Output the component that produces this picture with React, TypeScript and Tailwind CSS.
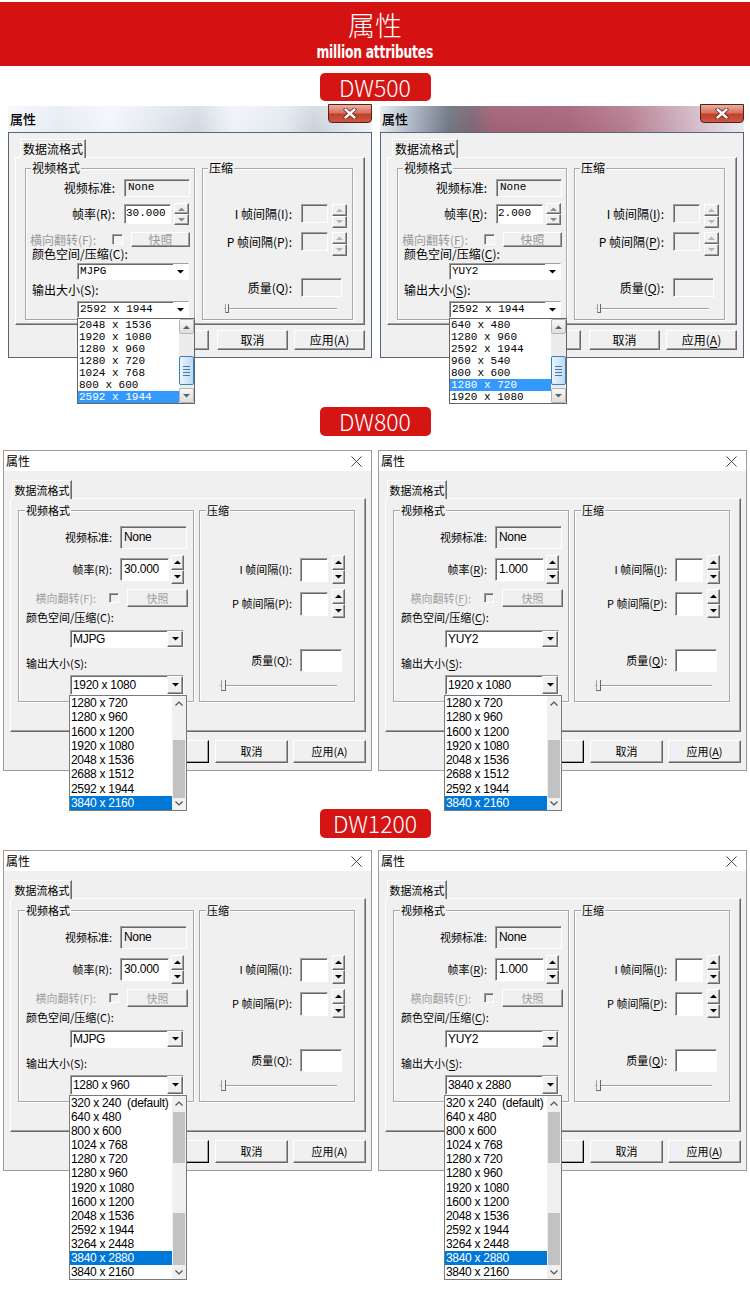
import React from "react";

type Thumb = { top: number; h: number };

// classic 3D borders
const raised =
  "border border-t-white border-l-white border-r-[#696969] border-b-[#696969] shadow-[inset_-1px_-1px_0_#a0a0a0] bg-[#f0f0f0]";
const sunken =
  "border border-t-[#a0a0a0] border-l-[#a0a0a0] border-r-white border-b-white shadow-[inset_1px_1px_0_#696969]";
const etched = "border border-[#a8a8a8] shadow-[inset_1px_1px_0_#fff,1px_1px_0_#fff]";

const GLASS_LEFT =
  "bg-[linear-gradient(180deg,rgba(255,255,255,0.6)_0%,rgba(255,255,255,0)_45%,rgba(255,255,255,0.35)_100%),linear-gradient(90deg,#e9f0f8_0%,#cdd8e6_14%,#e6edf6_28%,#c9d4e2_40%,#a8b5c6_52%,#dfe8f2_62%,#c8d3e0_76%,#9ca9ba_84%,#dfe7f1_100%)]";
const GLASS_RIGHT =
  "bg-[linear-gradient(180deg,rgba(255,255,255,0.25)_0%,rgba(255,255,255,0)_45%,rgba(255,255,255,0.2)_100%),linear-gradient(90deg,#dfe7f0_0%,#96a2b2_9%,#4c5666_19%,#5e4252_25%,#8a3a55_31%,#923f5b_52%,#a35f76_68%,#c4a0b0_84%,#e3e6ee_100%)]";

// label with an optional underlined access key, e.g. 帧率(R):
function Lb({ t, k, u }: { t: string; k?: string; u?: boolean }) {
  if (!k || !u) return <>{t}</>;
  const i = t.indexOf("(" + k + ")");
  return (
    <>
      {t.slice(0, i + 1)}
      <span className="underline underline-offset-[2px]">{k}</span>
      {t.slice(i + 2)}
    </>
  );
}

function Tri({ up, c = "#000" }: { up?: boolean; c?: string }) {
  return (
    <svg width="7" height="4" viewBox="0 0 7 4" className="block">
      <path d={up ? "M0 4L3.5 0.5L7 4Z" : "M0 0L7 0L3.5 3.5Z"} fill={c} />
    </svg>
  );
}

function Chev({ up }: { up?: boolean }) {
  return (
    <svg width="8" height="5" viewBox="0 0 8 5" className="block">
      <path
        d={up ? "M0.5 4.5L4 1L7.5 4.5" : "M0.5 0.5L4 4L7.5 0.5"}
        fill="none"
        stroke="#505050"
        strokeWidth="1.2"
      />
    </svg>
  );
}

function Spin({ cls, c }: { cls: string; c: string }) {
  return (
    <div className={`flex flex-col ${cls}`}>
      <div className={`flex-1 ${raised} flex items-center justify-center`}>
        <Tri up c={c} />
      </div>
      <div className={`flex-1 ${raised} flex items-center justify-center`}>
        <Tri c={c} />
      </div>
    </div>
  );
}

function Badge({ label, cls }: { label: string; cls: string }) {
  return (
    <div
      className={`mx-auto w-[111px] rounded-[5px] bg-[#d51414] text-white flex items-center justify-center text-[23px] font-light font-['Noto_Sans_CJK_SC',sans-serif] ${cls}`}
    >
      {label}
    </div>
  );
}

/* ---------- Windows 10 style dialog ---------- */

type Dlg10Props = {
  codec: string;
  fps: string;
  size: string;
  options: string[];
  sel: number;
  u?: boolean;
  thumbs: Thumb[];
  rowH: string;
};

function List10({ options, sel, thumbs, rowH }: { options: string[]; sel: number; thumbs: Thumb[]; rowH: string }) {
  return (
    <div className="absolute left-[-2px] top-[calc(100%+1px)] w-[118px] border border-[#7a7a7a] bg-white flex z-20 font-['Liberation_Sans',sans-serif] text-[12px] tracking-[-0.3px]">
      <div className="flex-1 flex flex-col">
        {options.map((o, i) => (
          <div
            key={i}
            className={`${rowH} leading-[14px] pl-[1px] whitespace-pre ${i === sel ? "bg-[#0078d7] text-white" : "text-black"}`}
          >
            {o}
          </div>
        ))}
      </div>
      <div className="w-[14px] relative bg-[#f0f0f0] flex flex-col justify-between">
        {thumbs.map((t, i) => (
          <div
            key={i}
            className="absolute left-[1px] right-[1px] bg-[#c2c2c2]"
            style={{ top: t.top, height: t.h }}
          />
        ))}
        <div className="h-[14px] flex items-center justify-center relative">
          <Chev up />
        </div>
        <div className="h-[14px] flex items-center justify-center relative">
          <Chev />
        </div>
      </div>
    </div>
  );
}

function Combo10({ value, children }: { value: string; children?: React.ReactNode }) {
  return (
    <div className={`${sunken} relative ml-[51px] w-[114px] h-full bg-white flex items-center`}>
      <span className="flex-1 pl-[2px] text-[12px] tracking-[-0.3px] font-['Liberation_Sans',sans-serif]">{value}</span>
      <div className={`${raised} w-[16px] h-full flex items-center justify-center`}>
        <Tri />
      </div>
      {children}
    </div>
  );
}

function Win10Dialog({ codec, fps, size, options, sel, u, thumbs, rowH }: Dlg10Props) {
  const val = "font-['Liberation_Sans',sans-serif] text-[12px] tracking-[-0.3px]";
  return (
    <div className="w-[369px] h-[321px] shrink-0 border border-[#9c9c9c] bg-[#f0f0f0] flex flex-col text-black text-[11px] font-['Noto_Sans_CJK_SC',sans-serif]">
      <div className="h-[20px] shrink-0 bg-white flex items-center justify-between pl-[2px] pr-[9px]">
        <span className="text-[12px]">属性</span>
        <svg width="11" height="11" viewBox="0 0 11 11">
          <path d="M0.5 0.5L10.5 10.5M10.5 0.5L0.5 10.5" stroke="#444" strokeWidth="1" />
        </svg>
      </div>

      <div className="pl-[6px] pt-[9px]">
        {/* tab */}
        <div className="ml-[2px] relative z-10 w-[60px] h-[19px] -mb-[1px] bg-[#f0f0f0] border border-b-0 border-t-white border-l-white border-r-[#696969] shadow-[inset_-1px_0_0_#a0a0a0] flex items-center justify-center">
          数据流格式
        </div>

        <div className="w-[356px] h-[234px] border border-t-white border-l-white border-r-[#696969] border-b-[#696969] shadow-[inset_-1px_-1px_0_#a0a0a0] pl-[7px] pt-[11px] flex">
          {/* 视频格式 */}
          <div className={`relative ${etched} w-[176px] h-[192px] flex flex-col`}>
            <span className="absolute -top-[8px] left-[6px] px-[1px] bg-[#f0f0f0] leading-[14px]">视频格式</span>

            <div className="mt-[15px] h-[23px] flex items-center">
              <span className="w-[93px] text-right">视频标准:</span>
              <div className={`${sunken} ml-[8px] w-[67px] h-[23px] bg-[#f0f0f0] pl-[3px] pt-[1px] ${val}`}>None</div>
            </div>

            <div className="mt-[6px] h-[29px] flex items-center">
              <span className="w-[93px] text-right">
                <Lb t="帧率(R):" k="R" u={u} />
              </span>
              <div className={`${sunken} ml-[8px] w-[49px] h-[23px] bg-white pl-[3px] pt-[1px] ${val}`}>{fps}</div>
              <Spin cls="ml-[2px] w-[13px] h-[29px]" c="#000" />
            </div>

            <div className="mt-[5px] h-[18px] flex items-center">
              <span className="w-[77px] text-right text-[#a0a0a0]">
                <Lb t="横向翻转(F):" k="F" u={u} />
              </span>
              <div className={`${sunken} ml-[13px] w-[10px] h-[10px] bg-[#f0f0f0]`} />
              <div className={`${raised} ml-[8px] w-[61px] h-[18px] flex items-center justify-center text-[#a0a0a0]`}>快照</div>
            </div>

            <div className="mt-[2px] h-[16px] pl-[7px] flex items-center">
              <Lb t="颜色空间/压缩(C):" k="C" u={u} />
            </div>

            <div className="mt-[5px] h-[18px] flex">
              <Combo10 value={codec} />
            </div>

            <div className="mt-[7px] h-[16px] pl-[7px] flex items-center">
              <Lb t="输出大小(S):" k="S" u={u} />
            </div>

            <div className="mt-[4px] h-[20px] flex">
              <Combo10 value={size}>
                <List10 options={options} sel={sel} thumbs={thumbs} rowH={rowH} />
              </Combo10>
            </div>
          </div>

          {/* 压缩 */}
          <div className={`relative ${etched} ml-[5px] w-[156px] h-[192px] flex flex-col`}>
            <span className="absolute -top-[8px] left-[6px] px-[1px] bg-[#f0f0f0] leading-[14px]">压缩</span>

            <div className="mt-[44px] h-[29px] flex items-center">
              <span className="w-[92px] text-right">
                <Lb t="I 帧间隔(I):" k="I" u={u} />
              </span>
              <div className={`${sunken} ml-[8px] w-[28px] h-[24px] bg-white`} />
              <Spin cls="ml-[4px] w-[13px] h-[29px]" c="#000" />
            </div>

            <div className="mt-[5px] h-[29px] flex items-center">
              <span className="w-[92px] text-right">
                <Lb t="P 帧间隔(P):" k="P" u={u} />
              </span>
              <div className={`${sunken} ml-[8px] w-[28px] h-[24px] bg-white`} />
              <Spin cls="ml-[4px] w-[13px] h-[29px]" c="#000" />
            </div>

            <div className="mt-[31px] h-[23px] flex items-center">
              <span className="w-[92px] text-right">
                <Lb t="质量(Q):" k="Q" u={u} />
              </span>
              <div className={`${sunken} ml-[8px] w-[42px] h-[23px] bg-white`} />
            </div>

            <div className="mt-[6px] h-[16px] pl-[20px] flex items-center relative">
              <div className="w-[117px] h-[2px] border-t border-t-[#a0a0a0] border-b border-b-white" />
              <div className="absolute left-[21px] top-[2px] w-[5px] h-[11px] border-l border-l-[#a0a0a0] border-b border-b-[#696969] border-r border-r-[#696969] bg-[#f0f0f0]" />
            </div>
          </div>
        </div>

        <div className="w-[356px] mt-[8px] flex justify-end gap-[5px]">
          <div className={`${raised} mr-[1px] w-[73px] h-[23px] border-r-black border-b-black flex items-center justify-center`}>确定</div>
          <div className={`${raised} w-[73px] h-[23px] flex items-center justify-center`}>取消</div>
          <div className={`${raised} w-[73px] h-[23px] flex items-center justify-center`}>
            <Lb t="应用(A)" k="A" u={u} />
          </div>
        </div>
      </div>
    </div>
  );
}

/* ---------- Windows 7 style dialog ---------- */

type Dlg7Props = {
  codec: string;
  fps: string;
  size: string;
  options: string[];
  sel: number;
  u?: boolean;
  glass: string;
};

function Combo7({ value, children }: { value: string; children?: React.ReactNode }) {
  return (
    <div className={`${sunken} relative ml-[51px] w-[112px] h-full bg-white flex items-center`}>
      <span className="flex-1 pl-[2px] text-[11px] font-['Liberation_Mono',monospace]">{value}</span>
      <div className="w-[15px] h-full flex items-center justify-center bg-white">
        <Tri />
      </div>
      {children}
    </div>
  );
}

function List7({ options, sel }: { options: string[]; sel: number }) {
  return (
    <div className="absolute left-[-1px] top-[calc(100%+1px)] w-[118px] border border-[#646464] bg-white flex z-20 font-['Liberation_Mono',monospace] text-[11px]">
      <div className="flex-1 flex flex-col">
        {options.map((o, i) => (
          <div
            key={i}
            className={`h-[12px] leading-[12px] pl-[1px] whitespace-pre ${i === sel ? "bg-[#3399ff] text-white" : "text-black"}`}
          >
            {o}
          </div>
        ))}
      </div>
      <div className="w-[15px] relative bg-[#ececec] flex flex-col justify-between">
        <div className="h-[15px] rounded-[2px] border border-[#b5b5b5] bg-[linear-gradient(180deg,#f7f7f7,#dedede)] flex items-center justify-center">
          <Tri up c="#606060" />
        </div>
        <div className="absolute left-0 right-0 top-[37px] h-[29px] rounded-[2px] border border-[#3c7fb1] bg-[linear-gradient(90deg,#eaf4fc,#bcdaf5)] flex flex-col items-center justify-center gap-[2px]">
          <div className="w-[7px] h-[1px] bg-[#4c78a8]" />
          <div className="w-[7px] h-[1px] bg-[#4c78a8]" />
          <div className="w-[7px] h-[1px] bg-[#4c78a8]" />
          <div className="w-[7px] h-[1px] bg-[#4c78a8]" />
        </div>
        <div className="h-[15px] rounded-[2px] border border-[#b5b5b5] bg-[linear-gradient(180deg,#f7f7f7,#dedede)] flex items-center justify-center">
          <Tri c="#606060" />
        </div>
      </div>
    </div>
  );
}

function Win7Dialog({ codec, fps, size, options, sel, u, glass }: Dlg7Props) {
  const val = "font-['Liberation_Mono',monospace] text-[11px]";
  return (
    <div className={`w-[364px] h-[252px] shrink-0 relative flex flex-col ${glass} text-black text-[12px] font-['Noto_Sans_CJK_SC',sans-serif]`}>
      <div className="h-[26px] shrink-0 flex items-center pl-[2px]">
        <span className="text-[13px] font-medium">属性</span>
      </div>
      <div className="absolute right-0 top-[-2px] w-[44px] h-[19px] rounded-b-[4px] border border-[#5a1d18] bg-[linear-gradient(180deg,#eab0a2_0%,#d9735f_45%,#c0402c_55%,#cc5a42_100%)] flex items-center justify-center">
        <svg width="14" height="11" viewBox="0 0 14 11">
          <path d="M2.5 1.5L11.5 9.5M11.5 1.5L2.5 9.5" stroke="#5a1d18" strokeWidth="4" strokeLinecap="round" />
          <path d="M2.5 1.5L11.5 9.5M11.5 1.5L2.5 9.5" stroke="#fff" strokeWidth="2.4" strokeLinecap="round" />
        </svg>
      </div>

      <div className="flex-1 border border-[#56657a] bg-[#f0f0f0] pl-[6px] pt-[6px]">
        <div className="ml-[5px] relative z-10 w-[66px] h-[19px] -mb-[1px] bg-[#f0f0f0] border border-b-0 border-t-white border-l-white border-r-[#696969] shadow-[inset_-1px_0_0_#a0a0a0,inset_0_1px_0_#e3e3e3] flex items-center justify-center">
          数据流格式
        </div>

        <div className="w-[350px] h-[168px] border border-t-white border-l-white border-r-[#696969] border-b-[#696969] shadow-[inset_-1px_-1px_0_#a0a0a0] pl-[9px] pt-[10px] flex">
          {/* 视频格式 */}
          <div className={`relative ${etched} w-[170px] h-[152px] flex flex-col`}>
            <span className="absolute -top-[9px] left-[5px] px-[1px] bg-[#f0f0f0] leading-[16px]">视频格式</span>

            <div className="mt-[10px] h-[18px] flex items-center">
              <span className="w-[89px] text-right">视频标准:</span>
              <div className={`${sunken} ml-[9px] w-[66px] h-[18px] bg-[#f0f0f0] pl-[3px] leading-[15px] ${val}`}>None</div>
            </div>

            <div className="mt-[6px] h-[22px] flex items-center">
              <span className="w-[89px] text-right">
                <Lb t="帧率(R):" k="R" u={u} />
              </span>
              <div className={`${sunken} ml-[9px] w-[47px] h-[20px] bg-white pl-[1px] leading-[17px] ${val}`}>{fps}</div>
              <Spin cls="ml-[3px] w-[15px] h-[22px]" c="#8a8a8a" />
            </div>

            <div className="mt-[7px] h-[15px] flex items-center">
              <span className="w-[70px] text-right text-[#9a9a9a] whitespace-nowrap">
                <Lb t="横向翻转(F):" k="F" u={u} />
              </span>
              <div className={`${sunken} ml-[16px] w-[11px] h-[11px] bg-[#f4f4f4]`} />
              <div className={`${raised} ml-[8px] w-[59px] h-[15px] flex items-center justify-center text-[#9a9a9a]`}>快照</div>
            </div>

            <div className="h-[14px] pl-[6px] flex items-center">
              <Lb t="颜色空间/压缩(C):" k="C" u={u} />
            </div>

            <div className="mt-[2px] h-[17px] flex">
              <Combo7 value={codec} />
            </div>

            <div className="mt-[3px] h-[14px] pl-[6px] flex items-center">
              <Lb t="输出大小(S):" k="S" u={u} />
            </div>

            <div className="mt-[4px] h-[17px] flex">
              <Combo7 value={size}>
                <List7 options={options} sel={sel} />
              </Combo7>
            </div>
          </div>

          {/* 压缩 */}
          <div className={`relative ${etched} ml-[7px] w-[151px] h-[152px] flex flex-col`}>
            <span className="absolute -top-[9px] left-[5px] px-[1px] bg-[#f0f0f0] leading-[16px]">压缩</span>

            <div className="mt-[35px] h-[24px] flex items-start">
              <span className="w-[89px] h-[19px] leading-[19px] text-right">
                <Lb t="I 帧间隔(I):" k="I" u={u} />
              </span>
              <div className={`${sunken} ml-[9px] w-[27px] h-[19px] bg-[#f0f0f0]`} />
              <Spin cls="ml-[4px] w-[15px] h-[24px]" c="#b4b4b4" />
            </div>

            <div className="mt-[4px] h-[24px] flex items-start">
              <span className="w-[89px] h-[19px] leading-[19px] text-right">
                <Lb t="P 帧间隔(P):" k="P" u={u} />
              </span>
              <div className={`${sunken} ml-[9px] w-[27px] h-[19px] bg-[#f0f0f0]`} />
              <Spin cls="ml-[4px] w-[15px] h-[24px]" c="#b4b4b4" />
            </div>

            <div className="mt-[22px] h-[19px] flex items-center">
              <span className="w-[89px] text-right">
                <Lb t="质量(Q):" k="Q" u={u} />
              </span>
              <div className={`${sunken} ml-[9px] w-[41px] h-[19px] bg-[#f0f0f0]`} />
            </div>

            <div className="mt-[5px] h-[14px] pl-[21px] flex items-center relative">
              <div className="w-[113px] h-[2px] border-t border-t-[#a0a0a0] border-b border-b-white" />
              <div className="absolute left-[22px] top-[2px] w-[4px] h-[9px] border-l border-l-[#a0a0a0] border-b border-b-[#696969] border-r border-r-[#696969] bg-[#f0f0f0]" />
            </div>
          </div>
        </div>

        <div className="w-[350px] mt-[5px] flex justify-end gap-[6px]">
          <div className={`${raised} mr-[2px] w-[71px] h-[20px] flex items-center justify-center`}>确定</div>
          <div className={`${raised} w-[71px] h-[20px] flex items-center justify-center`}>取消</div>
          <div className={`${raised} w-[71px] h-[20px] flex items-center justify-center`}>
            <Lb t="应用(A)" k="A" u={u} />
          </div>
        </div>
      </div>
    </div>
  );
}

const DW800_SIZES = [
  "1280 x 720",
  "1280 x 960",
  "1600 x 1200",
  "1920 x 1080",
  "2048 x 1536",
  "2688 x 1512",
  "2592 x 1944",
  "3840 x 2160",
];

const DW1200_SIZES = [
  "320 x 240  (default)",
  "640 x 480",
  "800 x 600",
  "1024 x 768",
  "1280 x 720",
  "1280 x 960",
  "1920 x 1080",
  "1600 x 1200",
  "2048 x 1536",
  "2592 x 1944",
  "3264 x 2448",
  "3840 x 2880",
  "3840 x 2160",
];

export default function App() {
  return (
    <div className="w-[750px] h-[1297px] overflow-hidden bg-white flex flex-col">
      <header className="mt-[2px] h-[64px] shrink-0 bg-[#d51212] flex flex-col items-center text-white">
        <div className="mt-[8px] h-[30px] leading-[30px] text-[27px] font-light font-['Noto_Sans_CJK_SC',sans-serif]">
          属性
        </div>
        <div className="mt-[3px] h-[18px] leading-[18px] text-[18px] font-bold font-['Liberation_Sans_Narrow','DejaVu_Sans_Condensed',sans-serif] scale-x-[0.76] tracking-[-0.3px]">
          million attributes
        </div>
      </header>

      <Badge label="DW500" cls="mt-[7px] h-[28px] shrink-0" />
      <div className="mt-[5px] h-[301px] shrink-0 flex pl-[8px] gap-[8px]">
        <Win7Dialog
          codec="MJPG"
          fps="30.000"
          size="2592 x 1944"
          options={["2048 x 1536", "1920 x 1080", "1280 x 960", "1280 x 720", "1024 x 768", "800 x 600", "2592 x 1944"]}
          sel={6}
          glass={GLASS_LEFT}
        />
        <Win7Dialog
          codec="YUY2"
          fps="2.000"
          size="2592 x 1944"
          options={["640 x 480", "1280 x 960", "2592 x 1944", "960 x 540", "800 x 600", "1280 x 720", "1920 x 1080"]}
          sel={5}
          u
          glass={GLASS_RIGHT}
        />
      </div>

      <Badge label="DW800" cls="h-[29px] shrink-0" />
      <div className="mt-[14px] h-[359px] shrink-0 flex pl-[3px] gap-[6px]">
        <Win10Dialog
          codec="MJPG"
          fps="30.000"
          size="1920 x 1080"
          options={DW800_SIZES}
          sel={7}
          thumbs={[{ top: 44, h: 58 }]}
          rowH="h-[14.3px]"
        />
        <Win10Dialog
          codec="YUY2"
          fps="1.000"
          size="1920 x 1080"
          options={DW800_SIZES}
          sel={7}
          u
          thumbs={[{ top: 44, h: 58 }]}
          rowH="h-[14.3px]"
        />
      </div>

      <Badge label="DW1200" cls="h-[29px] shrink-0" />
      <div className="mt-[12px] shrink-0 flex pl-[3px] gap-[6px]">
        <Win10Dialog
          codec="MJPG"
          fps="30.000"
          size="1280 x 960"
          options={DW1200_SIZES}
          sel={11}
          thumbs={[
            { top: 16, h: 51 },
            { top: 117, h: 52 },
          ]}
          rowH="h-[14.1px]"
        />
        <Win10Dialog
          codec="YUY2"
          fps="1.000"
          size="3840 x 2880"
          options={DW1200_SIZES}
          sel={11}
          u
          thumbs={[
            { top: 16, h: 51 },
            { top: 117, h: 52 },
          ]}
          rowH="h-[14.1px]"
        />
      </div>
    </div>
  );
}
